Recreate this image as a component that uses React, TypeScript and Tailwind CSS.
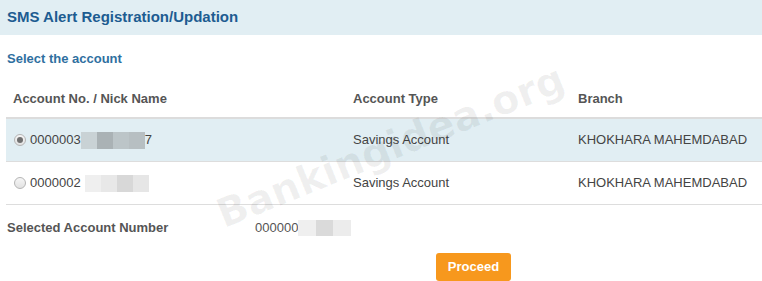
import React from "react";

type Row = {
  prefix: string;
  blocks: string[];
  suffix: string;
  type: string;
  branch: string;
  checked: boolean;
};

const rows: Row[] = [
  {
    prefix: "0000003",
    blocks: ["#c9d2d5", "#aab2b5", "#bcc5c8", "#b7bfc2"],
    suffix: "7",
    type: "Savings Account",
    branch: "KHOKHARA MAHEMDABAD",
    checked: true,
  },
  {
    prefix: "0000002",
    blocks: ["#efefef", "#e8e8e8", "#d8d8d8", "#e6e6e6"],
    suffix: "",
    type: "Savings Account",
    branch: "KHOKHARA MAHEMDABAD",
    checked: false,
  },
];

function Radio({ checked }: { checked: boolean }) {
  return (
    <span className="w-[12px] h-[12px] rounded-full border border-[#b5b5b5] bg-gradient-to-b from-[#f6f6f6] to-[#e2e2e2] flex items-center justify-center mr-[4px]">
      {checked && <span className="w-[6px] h-[6px] rounded-full bg-[#707070]" />}
    </span>
  );
}

export default function App() {
  return (
    <div className="w-[762px] h-[281px] bg-white relative overflow-hidden font-['Liberation_Sans',Arial,sans-serif]">
      {/* Titulo */}
      <div className="h-[35px] bg-[#e1eef3] pl-[7px] flex items-center text-[#1d5c91] font-bold text-[15px]">
        SMS Alert Registration/Updation
      </div>

      <div className="mt-[16px] pl-[7px] h-[16px] leading-[16px] text-[#2f6f9f] font-bold text-[13px]">
        Select the account
      </div>

      {/* Tabela */}
      <div className="ml-[6px] mt-[14px]">
        <div className="grid grid-cols-[340px_225px_1fr] h-[38px] items-center border-b-2 border-[#dcdcdc] text-[#555] font-bold text-[13px]">
          <span className="pl-[7px]">Account No. / Nick Name</span>
          <span className="pl-[7px]">Account Type</span>
          <span className="pl-[7px]">Branch</span>
        </div>
        {rows.map((r, i) => (
          <div
            key={i}
            className={`grid grid-cols-[340px_225px_1fr] h-[43px] items-center border-b border-[#dddddd] text-[#444] text-[13px] ${
              r.checked ? "bg-[#e1eef3]" : "bg-white"
            }`}
          >
            <span className="pl-[8px] flex items-center">
              <Radio checked={r.checked} />
              <span>{r.prefix}</span>
              <span className={`flex h-[17px] ${r.checked ? "" : "ml-[4px]"}`}>
                {r.blocks.map((c, j) => (
                  <span key={j} className="w-[16px] h-full" style={{ backgroundColor: c }} />
                ))}
              </span>
              {r.suffix && <span>{r.suffix}</span>}
            </span>
            <span className="pl-[7px]">{r.type}</span>
            <span className="pl-[7px]">{r.branch}</span>
          </div>
        ))}
      </div>

      {/* Conta selecionada */}
      <div className="mt-[15px] pl-[7px] h-[16px] flex items-center text-[13px]">
        <span className="w-[248px] font-bold text-[#555]">Selected Account Number</span>
        <span className="text-[#555]">000000</span>
        <span className="flex h-[16px]">
          <span className="w-[18px] bg-[#efefef]" />
          <span className="w-[17px] bg-[#dadada]" />
          <span className="w-[18px] bg-[#ececec]" />
        </span>
      </div>

      <div className="mt-[17px] pl-[436px]">
        <button className="w-[75px] h-[28px] rounded-[3px] bg-[#f7981d] text-white font-bold text-[13px] font-['Liberation_Sans',Arial,sans-serif]">
          Proceed
        </button>
      </div>

      {/* Marca d'agua */}
      <div className="absolute left-[205px] top-[116px] rotate-[-22deg] text-[40px] font-bold text-black/[0.06] font-['DejaVu_Sans',Verdana,sans-serif] pointer-events-none whitespace-nowrap">
        Bankingidea.org
      </div>
    </div>
  );
}
